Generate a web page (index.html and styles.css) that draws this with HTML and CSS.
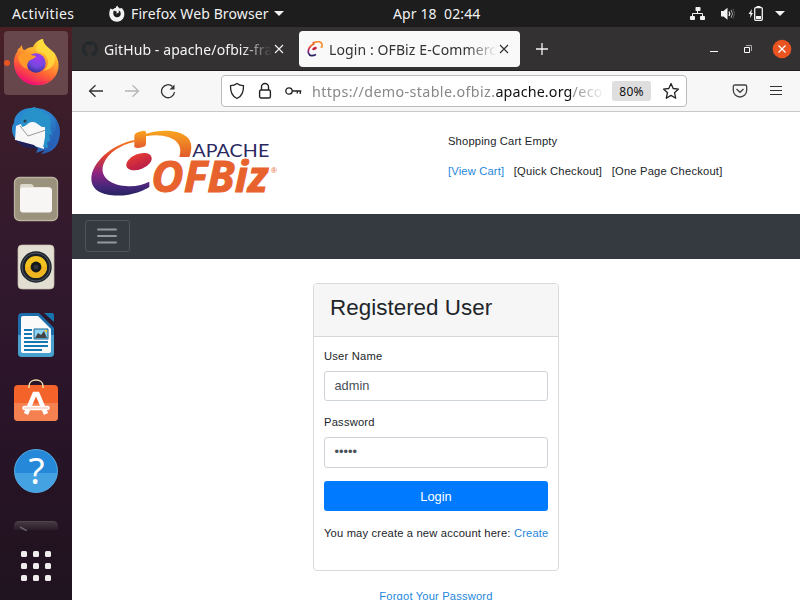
FILE: index.html
```html
<!DOCTYPE html>
<html lang="en">
<head>
<meta charset="utf-8">
<title>Login : OFBiz E-Commerce</title>
<link rel="stylesheet" href="styles.css">
</head>
<body>
<header class="topbar">
  <span class="activities">Activities</span>
  <svg class="app-icon" width="18" height="18" viewBox="0 0 18 18"><path d="M2.500 3.500 4.800 4.500C5.800 3.600 7 3 8 2.800 7.800 1.800 8.500 1 9.500.7 9.500 2 11 2.400 11.700 3.500L13.800 3C16 5.500 16.600 7.500 16.300 10 15.800 14 12.800 16.700 9 16.700 4.800 16.700 1.500 13.600 1.300 9.500 1.200 7 1.700 5 2.500 3.500Z" fill="#f2f2f2"/><path d="M5.800 5.500C4.300 9.800 6.300 12.300 9.100 12.300c2.500 0 4-2 3.600-4.300-.2-1.500-1.100-2.300-2.200-2.700.6 1 .5 2-.2 2.600L8 8.600 9 6.700Z" fill="#1d1d1d"/></svg>
  <span class="app-name">Firefox Web Browser</span>
  <i class="caret app-caret"></i>
  <span class="clock">Apr 18&nbsp; 02:44</span>
  <div class="status">
    <svg width="16" height="14" viewBox="0 0 16 14" fill="#f2f2f2"><rect x="5.500" y="0" width="5" height="4" rx=".8"/><rect x="0" y="9" width="5" height="4" rx=".8"/><rect x="10" y="9" width="5" height="4" rx=".8"/><path d="M7.500 4v3M2.500 9V6.500h10V9" fill="none" stroke="#f2f2f2"/></svg>
    <svg width="16" height="14" viewBox="0 0 16 14"><path d="M1 4h2.500L7.500.8v12L3.500 9.500H1Z" fill="#f2f2f2"/><path d="M9 4.500q1.500 2.200 0 4.500" fill="none" stroke="#f2f2f2" stroke-width="1.300"/><path d="M11 2.800q3 4 0 8" fill="none" stroke="#aaa"/><path d="M13 1.700q3 5 0 10" fill="none" stroke="#555"/></svg>
    <svg width="16" height="17" viewBox="0 0 16 17"><path d="M4 4 .5 9h2L2 13l3-5H3.300Z" fill="#f2f2f2"/><rect x="6.700" y="2.700" width="7.600" height="12.600" rx="1" fill="none" stroke="#f2f2f2" stroke-width="1.300"/><path d="M8.500 1h4v2h-4zM8 11h5v3H8z" fill="#f2f2f2"/></svg>
    <i class="caret"></i>
  </div>
</header>
<div class="desktop">
  <nav class="dock">
    <div class="tile active">
      <i class="running"></i>
      <svg viewBox="0 0 64 64"><defs><linearGradient id="ff" x1=".8" y1="0" x2=".3" y2="1"><stop offset="0" stop-color="#fff044"/><stop offset=".35" stop-color="#ffb02e"/><stop offset=".65" stop-color="#ff6433"/><stop offset="1" stop-color="#ed0a70"/></linearGradient><radialGradient id="globe" cx=".6" cy=".25" r=".8"><stop offset="0" stop-color="#a23af0"/><stop offset=".55" stop-color="#7548df"/><stop offset="1" stop-color="#352c92"/></radialGradient></defs>
      <path d="M18 14c0 4 1.500 5 3 5 2-2 5-3 8-3C31 11 36 8 39 8c0 6 7 9 12 15 6 9 4 20-3 26-7 7-22 7-30 0-7-6-10-16-7-24 1-3 3-5 3-7Q16 17 18 14Z" fill="url(#ff)"/><path d="M11 40c8 16 30 18 40 3-5 8-14 10-22 8-9-2-15-6-18-11Z" fill="#f1117b" opacity=".75"/><path d="M39 8c-6 4-8 9-6 13 6 0 11 4 11 10 0 4-2 7-5 9 9-2 13-7 12-17-3-5-12-7-12-15Z" fill="#ffdc3d" opacity=".8"/><circle cx="32" cy="32" r="9.700" fill="url(#globe)"/><path d="M14 26c3-5 9-6 13-2l5 1c-1 3-5 3-7 5-2 2-2 5-1 8-5-1-9-5-10-12Z" fill="#ff9a2a"/></svg>
    </div>
    <div class="tile">
      <svg viewBox="0 0 64 64"><defs><linearGradient id="tb" x1="0" y1="0" x2="1" y2="1"><stop offset="0" stop-color="#288bd0"/><stop offset=".5" stop-color="#2c83ce"/><stop offset="1" stop-color="#2449a5"/></linearGradient></defs><path d="M10 24C10 14 20 8 29 9c15-1 27 10 27 24 0 13-8 21-19 22l4-4-9 3 2-5-19-5C8 38 6 29 10 24Z" fill="url(#tb)"/><path d="M12 27 29 20l13 9-2 21-29-9Z" fill="#f7f7f7"/><path d="m16 27 8 10 18-6" fill="none" stroke="#9a9a9a"/><path d="m11 41 9 7 14 2-4-4Z" fill="#202058"/><path d="M18 28C14 18 23 9 31 8l3 3c9 1 15 8 12 17l2 8-3-1 1 7-3 1 1 6-5-1c3-10 2-15 2-20-5 1-8-6-13-5-4 0-5 4-10 5Z" fill="#2792ca"/><path d="M46 15c8 6 8 15 3 21l3 1-5 7 3 1-6 8c9-3 12-11 11-22-1-8-5-13-9-16Z" fill="#2864b9"/><circle cx="21" cy="22" r="1.500" fill="#333c46"/></svg>
    </div>
    <div class="tile">
      <svg viewBox="0 0 64 64"><rect x="10.500" y="10.500" width="43" height="43" rx="5" fill="#9b927d" stroke="#b9b29f" stroke-width="1.300"/><path d="M16 23v-4q0-2 2-2h9q2 0 3 3h14q3 0 3 3" fill="#ddd8cb"/><rect x="16" y="20.500" width="32" height="25" rx="3" fill="#f7f6f4"/></svg>
    </div>
    <div class="tile">
      <svg viewBox="0 0 64 64"><rect x="14" y="10" width="36" height="44" rx="4" fill="#e3ded2" stroke="#c4beb0" stroke-width=".7"/><circle cx="32" cy="32" r="15.700" fill="#1b2029"/><circle cx="32" cy="32" r="14" fill="none" stroke="#535963"/><circle cx="32" cy="32" r="11" fill="#f3c321"/><path d="M21 32a11 11 0 0 0 22 0Z" fill="#efb420"/><circle cx="32" cy="32" r="5.400" fill="#15171a"/><circle cx="32" cy="32" r="2.500" fill="#30343a"/></svg>
    </div>
    <div class="tile">
      <svg viewBox="0 0 64 64"><path d="M18 10h17l15 15v25q0 4-4 4H18q-4 0-4-4V14q0-4 4-4Z" fill="#1b6ea9"/><path d="M14 32h36v18q0 4-4 4H18q-4 0-4-4Z" fill="#48a0cf"/><path d="M40 10h8q2 0 2 2v7Z" fill="#1675ac"/><path d="M19 13h15l13 13v22q0 2-2 2H19q-2 0-2-2V15q0-2 2-2Z" fill="#fafafa"/><path d="M20 27h8M20 31h8M20 35h8M20 39h24M20 43h24M20 47h18" stroke="#1677b1" stroke-width="2"/><path d="M30 26h14v10H30Z" fill="#8ed4f2" stroke="#176694"/><path d="m31 35 3-5 3 2 3-4 3 7Z" fill="#444"/><path d="M40 27h3v3Z" fill="#ffc729"/></svg>
    </div>
    <div class="tile">
      <svg viewBox="0 0 64 64"><rect x="10" y="14" width="44" height="36" rx="4" fill="#f4632a"/><path d="M10 32h44v14q0 4-4 4H14q-4 0-4-4Z" fill="#f58050"/><path d="M25 17v-2c0-8 14-8 14 0v2" fill="none" stroke="#f4dfad" stroke-width="1.500"/><path d="m22 43 8.500-20h3L42 43" fill="none" stroke="#fff" stroke-width="4.500"/><path d="M20.500 37h23" fill="none" stroke="#fff" stroke-width="4.500" stroke-linecap="round"/><path d="M20 37h24" stroke="#f9b090" stroke-width=".8"/></svg>
    </div>
    <div class="tile">
      <div class="help">?</div>
    </div>
    <div class="terminal"><svg width="44" height="9" viewBox="0 0 44 9"><path d="m6 5 7 4" stroke="#666168" stroke-width="1.500"/></svg></div>
    <div class="apps"><i></i><i></i><i></i><i></i><i></i><i></i><i></i><i></i><i></i></div>
  </nav>
  <main class="browser">
    <div class="tabs">
      <div class="tab">
        <svg class="favicon" width="16" height="16" viewBox="0 0 16 16"><path fill="#24292e" d="M8 0C3.580 0 0 3.580 0 8c0 3.540 2.290 6.530 5.470 7.590.4.070.55-.17.55-.38 0-.19-.01-.82-.01-1.490-2.010.37-2.530-.49-2.690-.94-.09-.23-.48-.94-.82-1.130-.28-.15-.68-.52-.01-.53.63-.01 1.080.58 1.230.82.72 1.210 1.870.87 2.330.66.07-.52.28-.87.51-1.070-1.780-.2-3.640-.89-3.640-3.950 0-.87.31-1.590.82-2.150-.08-.2-.36-1.020.08-2.120 0 0 .67-.21 2.200.82a7.400 7.400 0 0 1 4 0c1.530-1.040 2.200-.82 2.200-.82.44 1.100.16 1.920.08 2.120.51.56.82 1.270.82 2.150 0 3.070-1.870 3.750-3.650 3.950.29.25.54.73.54 1.480 0 1.070-.01 1.930-.01 2.200 0 .21.15.46.55.38A8 8 0 0 0 8 0Z"/></svg>
        <span class="tab-title">GitHub - apache/ofbiz-fra</span>
        <svg class="close" width="10" height="10" viewBox="0 0 10 10"><path d="m1 1 8 8m0-8L1 9" stroke="#eee" stroke-width="1.200"/></svg>
      </div>
      <div class="tab selected">
        <svg class="favicon" width="16" height="16" viewBox="0 0 16 16"><path d="M7 3C3 4 .500 9 1.500 12c1 3.500 4.500 3 7.500 1.500" fill="none" stroke="url(#brand)" stroke-width="1.700"/><path d="M7 1.500C11 0 16 0 15 6h-1.500" fill="none" stroke="#f58b2b" stroke-width="1.500"/><path d="M6.500 1v3" stroke="#e8672a" stroke-width="2"/><ellipse cx="7.500" cy="7.500" rx="2.500" ry="1.500" transform="rotate(-25 7.500 7.500)" fill="#c92343"/></svg>
        <span class="tab-title">Login : OFBiz E-Commerce</span>
        <svg class="close" width="10" height="10" viewBox="0 0 10 10"><path d="m1 1 8 8m0-8L1 9" stroke="#333" stroke-width="1.200"/></svg>
      </div>
      <svg class="new-tab" width="12" height="12" viewBox="0 0 12 12"><path d="M6 0v12M0 6h12" stroke="#f5f5f5" stroke-width="1.300"/></svg>
      <div class="window-buttons">
        <svg width="8" height="10" viewBox="0 0 8 10"><path d="M0 7.500h8" stroke="#fff"/></svg>
        <svg width="8" height="10" viewBox="0 0 8 10"><path d="M2 1.500h5.500V7" fill="none" stroke="#aaa"/><path d="M.5 3.500h5v5h-5Z" fill="none" stroke="#fff"/></svg>
        <svg width="20" height="20" viewBox="0 0 20 20"><circle cx="10" cy="10" r="9.300" fill="#e95420"/><path d="m6.500 6.500 7 7m0-7-7 7" stroke="#fff" stroke-width="1.300"/></svg>
      </div>
    </div>
    <div class="toolbar">
      <svg width="16" height="16" viewBox="0 0 16 16"><path d="M15 8H1.500m6-5.800L1.500 8l6 5.800" fill="none" stroke="#333" stroke-width="1.300"/></svg>
      <svg width="16" height="16" viewBox="0 0 16 16"><path d="M1 8h13.500m-6-5.800 6 5.800-6 5.800" fill="none" stroke="#b5b5b5" stroke-width="1.300"/></svg>
      <svg width="16" height="16" viewBox="0 0 16 16"><path d="M12.500 3.500A6.500 6.500 0 1 0 14.500 9" fill="none" stroke="#333" stroke-width="1.300"/><path d="M14.500 1.500v5h-5Z" fill="#333"/></svg>
      <div class="urlbar">
        <svg width="16" height="18" viewBox="0 0 16 18"><path d="M8 1.500c2 1.500 4.500 2.100 6.500 2.200C14.700 10 12.500 14.500 8 16.500 3.500 14.500 1.300 10 1.500 3.700 3.500 3.600 6 3 8 1.500Z" fill="none" stroke="#222" stroke-width="1.300" stroke-linejoin="round"/></svg>
        <svg width="14" height="18" viewBox="0 0 14 18"><path d="M3.500 8V5a3.500 3.500 0 0 1 7 0v3" fill="none" stroke="#222" stroke-width="1.400"/><rect x="1.600" y="8" width="10.800" height="8" rx="1.500" fill="none" stroke="#222" stroke-width="1.400"/></svg>
        <svg width="17" height="10" viewBox="0 0 17 10"><circle cx="4" cy="5" r="3.200" fill="none" stroke="#222" stroke-width="1.300"/><path d="M7.300 5h9m-1 0v3m-3-3v2.500" fill="none" stroke="#222" stroke-width="1.300"/></svg>
        <span class="url">https://demo-stable.ofbiz.<b>apache.org</b>/ecom</span>
        <span class="zoom">80%</span>
        <svg width="18" height="18" viewBox="0 0 18 18"><path d="m9 1.500 2.200 5 5.300.6-4 3.600 1.200 5.500L9 13.400l-4.700 2.800 1.200-5.500-4-3.600 5.300-.6Z" fill="none" stroke="#222" stroke-width="1.300" stroke-linejoin="round"/></svg>
      </div>
      <svg class="pocket" width="16" height="16" viewBox="0 0 16 16"><path d="M2.700 2h10.600q1.400 0 1.400 1.400v3.900a6.700 6.700 0 0 1-13.400 0V3.400Q1.300 2 2.700 2Z" fill="none" stroke="#444" stroke-width="1.300"/><path d="m4.500 6 3.500 3.300L11.500 6" fill="none" stroke="#444" stroke-width="1.400"/></svg>
      <svg width="12" height="12" viewBox="0 0 12 12"><path d="M0 1.500h12M0 5.500h12M0 9.500h12" stroke="#333" stroke-width="1.200"/></svg>
    </div>
    <div class="site-header">
      <svg class="logo" width="210" height="90" viewBox="0 0 630 270">
        <defs><linearGradient id="brand" x1="0" y1="0" x2="0" y2="1"><stop offset="0" stop-color="#f58220"/><stop offset=".3" stop-color="#dc3e32"/><stop offset=".6" stop-color="#8c2382"/><stop offset=".85" stop-color="#43277a"/><stop offset="1" stop-color="#28225f"/></linearGradient><linearGradient id="arc" x1="0" y1="0" x2="0" y2="1"><stop offset="0" stop-color="#f9a51f"/><stop offset="1" stop-color="#e25a2c"/></linearGradient><linearGradient id="core" x1="0" y1="0" x2="0" y2="1"><stop offset="0" stop-color="#e23a34"/><stop offset="1" stop-color="#b91c4a"/></linearGradient></defs>
        <path d="M163 75C94 89 35 143 34 191c0 43 52 57 112 48 25-4 47-14 62-23v-16c-18 9-44 16-70 13-55-4-80-34-67-67 11-30 50-57 92-65Z" fill="url(#brand)"/>
        <path d="M198 56c45-14 104-12 127 14 13 17 10 39 3 56h-30c9-29-3-49-31-59-20-7-45-8-69-3Z" fill="url(#arc)"/>
        <path d="M163 96V65q0-10 10-13 20-8 25-2v37q-1 8-12 10-15 5-23-1Z" fill="url(#arc)"/>
        <ellipse cx="177" cy="140" rx="40" ry="23" transform="rotate(-22 177 140)" fill="url(#core)"/>
        <text x="337" y="125" class="logo-top" textLength="231" lengthAdjust="spacingAndGlyphs">APACHE</text>
        <text x="214" y="230" class="logo-main" textLength="350" lengthAdjust="spacingAndGlyphs">OFBiz</text>
        <text x="573" y="173" class="logo-mark">®</text>
      </svg>
      <div class="cart">
        <p>Shopping Cart Empty</p>
        <p class="cart-links"><a>[View Cart]</a><span>[Quick Checkout]</span><span>[One Page Checkout]</span></p>
      </div>
    </div>
    <div class="navbar"><div class="toggler"><svg width="24" height="24" viewBox="0 0 24 24"><path d="M3 5.500h18M3 12h18M3 18.500h18" stroke="#94979a" stroke-width="1.900" stroke-linecap="round"/></svg></div></div>
    <section class="content">
      <div class="card">
        <h3>Registered User</h3>
        <form class="card-body">
          <label>User Name</label>
          <div class="field">admin</div>
          <label class="second">Password</label>
          <div class="field password">•••••</div>
          <div class="login">Login</div>
          <p>You may create a new account here: <a>Create</a></p>
        </form>
      </div>
      <a class="forgot">Forgot Your Password</a>
    </section>
  </main>
</div>
</body>
</html>
```
FILE: styles.css
```css
* { box-sizing: border-box; }
body { margin: 0; width: 800px; height: 600px; overflow: hidden; background: #fff; font-family: "Noto Sans", sans-serif; }
svg { display: block; flex: none; }
p, h3 { margin: 0; }

.topbar { height: 27px; background: #1d1d1d; color: #f2f2f2; display: flex; align-items: center; padding-left: 12px; font-size: 14px; white-space: nowrap; }
.activities { width: 96px; letter-spacing: .4px; }
.app-icon { margin-right: 5px; }
.app-name { width: 137px; letter-spacing: .12px; }
.caret { border: 5px solid transparent; border-top-color: #f2f2f2; border-bottom: 0; }
.app-caret { margin-left: 6px; }
.clock { margin-left: 109px; width: 90px; letter-spacing: .1px; }
.status { margin-left: auto; margin-right: 15px; display: flex; align-items: center; gap: 12px; }
.status svg:nth-child(1) { margin-right: 2px; }
.status svg:nth-child(3) { margin-left: 2px; margin-right: -2px; }
.status svg:nth-child(2) { margin-right: -2px; }
.status .caret { margin-left: 1px; }

.desktop { display: flex; height: 573px; }
.dock { width: 72px; flex: none; padding: 4px; background: linear-gradient(#4a2025 0, #3d1d29 12%, #341a2d 35%, #2a142a 65%, #231321 90%, #201420); display: flex; flex-direction: column; align-items: center; gap: 4px; }
.tile { width: 64px; height: 64px; flex: none; display: flex; align-items: center; justify-content: center; position: relative; }
.tile svg { width: 64px; height: 64px; }
.active { background: #68474c; border-radius: 4px; }
.running { position: absolute; left: 0; top: 29px; width: 6px; height: 6px; border-radius: 50%; background: #e95420; }
.help { width: 44px; height: 44px; border-radius: 50%; border: 1px solid #55aee7; background: linear-gradient(#2588d8 54%, #44a2e2 54%); color: #fff; font-size: 37px; line-height: 40px; text-align: center; padding-left: 1px; }
.terminal { width: 44px; height: 9px; margin-top: 14px; border-radius: 5px 5px 0 0; background: linear-gradient(#453843, #2a1c28); border-top: 1px solid #504550; flex: none; }
.apps { margin-top: 17px; display: grid; grid-template-columns: repeat(3, 6px); gap: 6px; }
.apps i { width: 6px; height: 6px; border-radius: 1.5px; background: #f0eeec; }

.browser { width: 728px; display: flex; flex-direction: column; }
.tabs { height: 44px; flex: none; background: #333132; border-bottom: 1px solid #1f1e1f; display: flex; align-items: center; }
.tab { width: 227px; height: 36px; display: flex; align-items: center; padding-left: 10px; color: #f4f4f4; font-size: 14px; letter-spacing: .1px; line-height: 22px; }
.tab-title { width: 168px; margin-left: 6px; padding-top: 2px; overflow: hidden; white-space: nowrap; mask-image: linear-gradient(to right, #000 82%, transparent); }
.close { margin-left: 2px; }
.selected { width: 221px; background: #f9f9fa; border-radius: 4px; padding-left: 8px; color: #333; }
.new-tab { margin-left: 16px; }
.window-buttons { margin-left: auto; margin-right: 8px; display: flex; align-items: center; }
.window-buttons svg:nth-child(2) { margin: 0 20px 0 26px; }

.toolbar { height: 41px; flex: none; background: #f7f7f7; border-bottom: 1px solid #c8c8c8; display: flex; align-items: center; padding-left: 16px; }
.toolbar > svg:nth-child(-n+2) { margin-right: 20px; }
.urlbar { width: 466px; height: 32px; margin-left: 45px; border: 1px solid #bcbcbc; border-radius: 4px; background: #fff; display: flex; align-items: center; padding-left: 7px; }
.urlbar svg:nth-child(2) { margin: 0 13px; }
.url { width: 297px; margin-left: 10px; margin-right: -1px; font-size: 14.3px; letter-spacing: .37px; color: #888; overflow: hidden; white-space: nowrap; mask-image: linear-gradient(to right, #000 88%, transparent 99%); }
.url b { color: #111; font-weight: 400; letter-spacing: .15px; }
.zoom { width: 39px; height: 20px; margin: 0 11px 0 4px; border-radius: 3px; background: #dedede; color: #111; font-size: 12px; letter-spacing: .2px; line-height: 21px; text-align: center; }
.pocket { margin: 0 22px 0 45px; }

.site-header { height: 102px; flex: none; display: flex; padding: 3px 0 0 8px; }
.logo-top { font: 400 53px Lato, sans-serif; fill: #2a2761; }
.logo-main { font: italic 700 128px "Open Sans", sans-serif; fill: #e8622d; stroke: #e8622d; stroke-width: 3px; }
.logo-mark { font: 24px "Liberation Sans", sans-serif; fill: #e8622d; }
.site-header, .content { font-family: "Liberation Sans", sans-serif; font-size: 11.2px; letter-spacing: .16px; line-height: 16px; color: #212529; }
.cart { margin: 18px 0 0 158px; white-space: nowrap; }
.cart-links { margin-top: 14px; display: flex; gap: 9.5px; }
.cart-links span { letter-spacing: .2px; }
a { color: #2487dc; }
.navbar { height: 45px; flex: none; background: #343a40; display: flex; align-items: center; padding: 0 0 2px 13px; }
.toggler { width: 45px; height: 32px; border: 1px solid #50555a; border-radius: 3px; display: flex; align-items: center; justify-content: center; padding-right: 1px; }

.content { display: flex; flex-direction: column; align-items: center; padding-top: 24px; }
.card { width: 246px; height: 288px; flex: none; border: 1px solid #dadada; border-radius: 4px; }
.card h3 { height: 53px; background: #f6f6f6; border-bottom: 1px solid #d8d8d8; padding-left: 16px; font-size: 22.4px; letter-spacing: .03px; line-height: 48px; font-weight: 400; border-radius: 3px 3px 0 0; }
.card-body { padding: 11px 10px; white-space: nowrap; }
.card-body label { display: block; letter-spacing: .2px; }
.card-body .second { margin-top: 13px; }
.field { height: 30px; margin-top: 7px; border: 1px solid #ced4da; border-radius: 3px; padding-left: 9.5px; font-size: 12.8px; letter-spacing: 0; line-height: 28px; color: #495057; }
.password { height: 31px; }
.login { height: 30px; margin-top: 13px; border-radius: 3px; background: #007bff; color: #fff; font-size: 12.8px; letter-spacing: 0; line-height: 31px; text-align: center; }
.card-body p { margin-top: 14px; }
.forgot { margin-top: 17px; }
```
